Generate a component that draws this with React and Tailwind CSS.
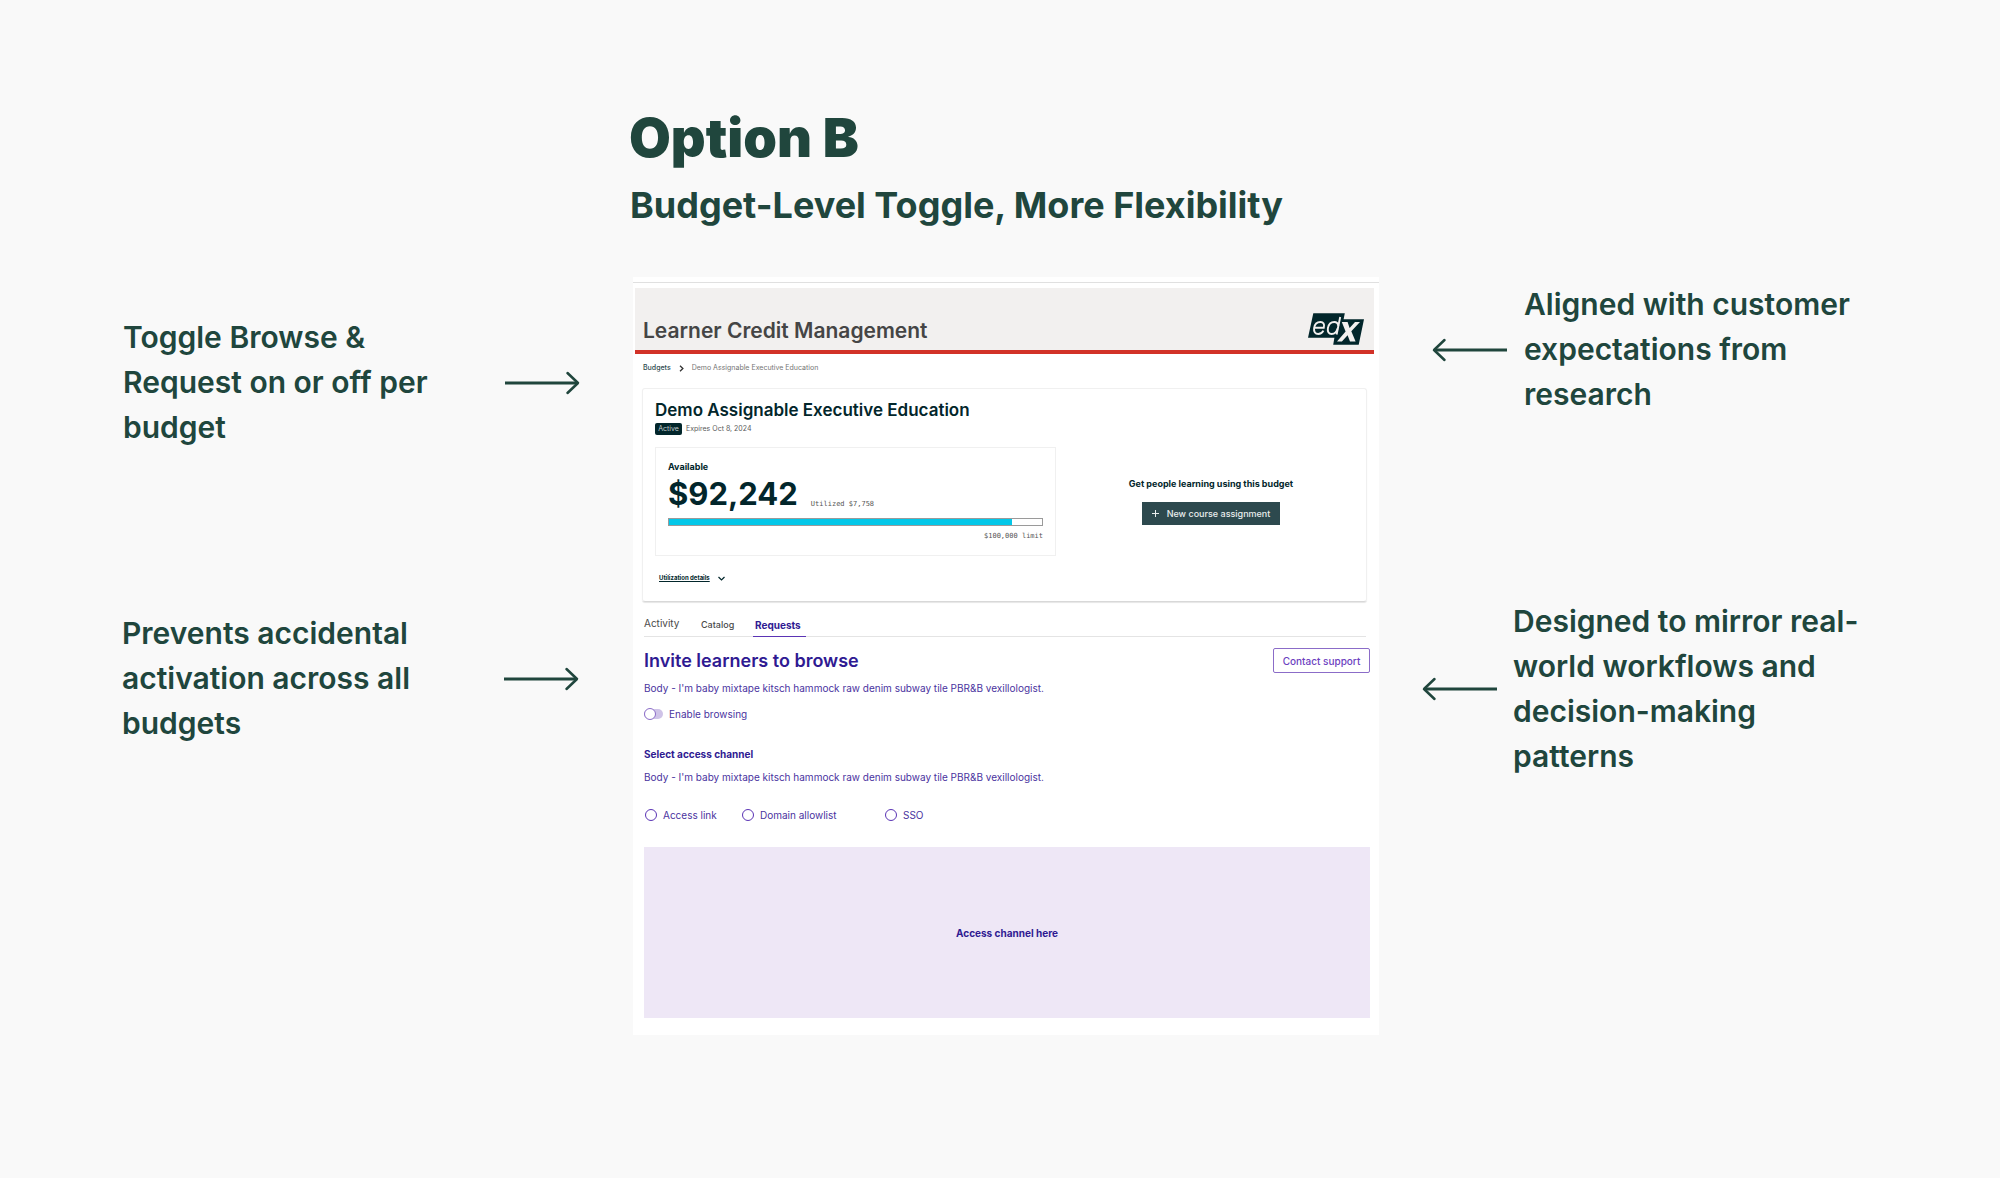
import React from "react";

const INTER = "font-['Inter',sans-serif]";

function Arrow({ flip }) {
  return (
    <svg
      width="76"
      height="26"
      viewBox="0 0 76 26"
      fill="none"
      stroke="currentColor"
      strokeWidth="3"
      className={flip ? "shrink-0 rotate-180" : "shrink-0"}
      aria-hidden="true"
    >
      <path d="M0 13H73" />
      <path d="M62.500 3L73 13L62.500 23" strokeLinecap="round" strokeLinejoin="round" strokeWidth="2.500" />
    </svg>
  );
}

function EdxLogo() {
  return (
    <svg width="56" height="32" viewBox="0 0 56 32" role="img" aria-label="edX">
      <path d="M5.300 0.300H36.800L35.600 6.300H56L50.700 31.700H25.200L26.400 24.800H0Z" fill="#02262b" />
      <g fill="none" stroke="#f2f0ef" strokeWidth="1.900">
        <path d="M6.800 14.800H15.800C16.800 11.300 15.300 9 12.500 9C9 9 6.600 11.600 6.100 15.200C5.600 18.800 7.300 21 10.200 21C12.500 21 14.300 19.800 15.400 17.600" />
        <path d="M32.200 4L28.600 21.500" />
        <path d="M30.400 12.800C30 10.300 28.500 9 26.300 9C22.800 9 20.500 11.800 19.900 15.200C19.300 18.700 20.800 21 23.700 21C26.600 21 28.800 18.800 29.600 15.600" />
      </g>
      <path d="M33.800 9H39.600L41.600 15L47 9H52L43.300 18.300L47.600 28.500H42L39.600 22.200L33.900 28.500H29L37.600 18.500Z" fill="#f2f0ef" />
    </svg>
  );
}

function Note({ children, flip, className }) {
  return (
    <div className={className}>
      {flip && <Arrow flip />}
      <p className="w-[352px] text-[30px] leading-[45px] font-semibold">{children}</p>
      {!flip && <Arrow />}
    </div>
  );
}

function RadioOption({ label, id, className }) {
  return (
    <div className={className}>
      <input
        type="radio"
        name="channel"
        id={id}
        className="m-0 size-3 shrink-0 appearance-none rounded-full border border-[#5b34b5] checked:bg-[#5b34b5]"
      />
      <label htmlFor={id}>{label}</label>
    </div>
  );
}

function BudgetCard() {
  return (
    <section className="mr-3 ml-[9px] mt-[10px] h-[214px] rounded-[3px] border border-[#f0f0f0] border-b-[#d8d8d8] pl-3 text-[#02262b] shadow-[0_1px_1px_#e6e6e6]">
      <h3 className="mt-2 text-[17px] leading-[26px] font-semibold">Demo Assignable Executive Education</h3>
      <div className="flex items-center gap-1">
        <span className="h-3 w-[27px] rounded-[2px] bg-[#02262b] text-center text-[7px] leading-3 text-[#c3cccd]">Active</span>
        <span className="text-[7px] leading-3 text-[#5a5a5a]">Expires Oct 8, 2024</span>
      </div>
      <div className="mt-3 flex">
        <div className="h-[109px] w-[401px] border border-[#f0f0f0] px-3 pt-[13px]">
          <p className="text-[9px] leading-3 font-bold">Available</p>
          <div className="mt-px flex items-end gap-[13px]">
            <span className="text-[31px] leading-10 font-bold">$92,242</span>
            <span className="pb-[6px] font-['DejaVu_Sans_Mono',monospace] text-[7px] leading-2 text-[#555]">Utilized $7,758</span>
          </div>
          <div className="mt-1 h-2 border border-[#9a9a9a] bg-white">
            <div className="h-full w-[92%] bg-[#03c7e8]" />
          </div>
          <p className="mt-[6px] text-right font-['DejaVu_Sans_Mono',monospace] text-[7px] leading-2 text-[#555]">$100,000 limit</p>
        </div>
        <div className="flex flex-1 flex-col items-center pt-[31px]">
          <p className="text-[9px] leading-3 font-bold">Get people learning using this budget</p>
          <button type="button" className="mt-3 flex h-[23px] w-[138px] items-center justify-center gap-2 bg-[#2d494e] text-[9px] leading-3 font-medium text-[#e9eded]">
            <svg width="7" height="7" viewBox="0 0 7 7" stroke="currentColor" aria-hidden="true">
              <path d="M3.500 0V7M0 3.500H7" />
            </svg>
            New course assignment
          </button>
        </div>
      </div>
      <button type="button" className="mt-4 ml-1 flex items-center gap-2 text-[6px] leading-3 font-bold">
        <span className="underline">Utilization details</span>
        <svg width="7" height="5" viewBox="0 0 7 5" fill="none" stroke="currentColor" strokeWidth="1.200" aria-hidden="true">
          <path d="M0.500 1L3.500 4L6.500 1" />
        </svg>
      </button>
    </section>
  );
}

function RequestsPanel() {
  return (
    <section className="mr-[9px] ml-[11px] text-[10px] leading-4 text-[#4a33a0]">
      <div className="mt-[11px] flex items-center justify-between">
        <h3 className="text-[18px] leading-6 font-semibold text-[#2f1a92]">Invite learners to browse</h3>
        <button type="button" className="h-[25px] w-[97px] rounded-[2px] border border-[#8b6cc8] text-[10px] font-medium text-[#6c3fbf]">Contact support</button>
      </div>
      <p className="mt-[7px]">Body - I'm baby mixtape kitsch hammock raw denim subway tile PBR&amp;B vexillologist.</p>
      <div className="mt-[10px] flex items-center gap-[6px]">
        <input
          type="checkbox"
          role="switch"
          id="browsing"
          className="m-0 flex h-[10px] w-[19px] appearance-none items-center rounded-full bg-[#cfc3e8] before:size-3 before:shrink-0 before:rounded-full before:border before:border-[#8b6cc8] before:bg-white"
        />
        <label htmlFor="browsing">Enable browsing</label>
      </div>
      <h4 className="mt-6 font-bold text-[#2f1a92]">Select access channel</h4>
      <p className="mt-[7px]">Body - I'm baby mixtape kitsch hammock raw denim subway tile PBR&amp;B vexillologist.</p>
      <div className="mt-[22px] flex pl-px">
        <RadioOption id="link" label="Access link" className="flex w-[97px] items-center gap-[6px]" />
        <RadioOption id="domain" label="Domain allowlist" className="flex w-[143px] items-center gap-[6px]" />
        <RadioOption id="sso" label="SSO" className="flex items-center gap-[6px]" />
      </div>
      <div className="mt-6 flex h-[171px] items-center justify-center bg-[#eee7f6] font-bold text-[#2f1a92]">Access channel here</div>
    </section>
  );
}

export default function App() {
  return (
    <main className={`${INTER} grid min-h-screen grid-cols-[633fr_746fr_621fr] bg-[#f9f9f9] text-[#20463d]`}>
      <aside className="pt-[315px]">
        <Note className="ml-[123px] flex items-center gap-[30px]">
          Toggle Browse &amp; Request on or off per budget
        </Note>
        <Note className="mt-[161px] ml-[122px] flex items-center gap-[30px]">
          Prevents accidental activation across all budgets
        </Note>
      </aside>

      <div className="pt-[104px] pb-[144px]">
        <h1 className="-ml-1 text-[54px] leading-[68px] font-black">Option B</h1>
        <h2 className="-ml-[3px] mt-[10px] text-[36px] leading-[46px] font-bold whitespace-nowrap">
          Budget-Level Toggle, More Flexibility
        </h2>
        <article className="mt-[49px] bg-white pt-[5px] pb-[17px]">
          <header className="border-t border-[#e0e0e0] pt-[5px]">
            <div className="mr-[5px] ml-[2px] flex h-[66px] items-start justify-between border-b-4 border-[#d23228] bg-[#f2f0ef] pr-[10px] pl-2">
              <h2 className="mt-[29px] text-[21px] leading-7 font-semibold text-[#454545]">Learner Credit Management</h2>
              <div className="mt-[25px]">
                <EdxLogo />
              </div>
            </div>
          </header>
          <nav aria-label="Breadcrumb" className="mt-2 ml-[10px] flex items-center gap-2 text-[7px] leading-3">
            <a href="#budgets" className="font-medium text-[#2d494e]">Budgets</a>
            <svg width="5" height="7" viewBox="0 0 5 7" fill="none" stroke="#333" strokeWidth="1.300" aria-hidden="true">
              <path d="M1 0.700L3.900 3.500L1 6.300" />
            </svg>
            <span className="text-[#757575]">Demo Assignable Executive Education</span>
          </nav>
          <div className="pt-1">
            <BudgetCard />
          </div>
          <nav aria-label="Budget" className="mr-[13px] ml-[11px] mt-[13px] flex h-[22px] border-b border-[#e4e4e4] text-[9px] leading-4 text-[#4a4a4a]">
            <a href="#activity" className="w-[57px] text-[10px]">Activity</a>
            <a href="#catalog" className="w-[52px] pt-[2px] font-medium">Catalog</a>
            <a href="#requests" className="-mb-px w-[53px] border-b border-[#5b34b5] pt-[2px] pl-[2px] text-[10px] font-bold text-[#2f1a92]">Requests</a>
          </nav>
          <RequestsPanel />
        </article>
      </div>

      <aside className="pt-[282px]">
        <Note flip className="ml-[52px] flex items-center gap-[17px]">
          Aligned with customer expectations from research
        </Note>
        <Note flip className="mt-[182px] ml-[42px] flex items-center gap-4">
          Designed to mirror real-world workflows and decision-making patterns
        </Note>
      </aside>
    </main>
  );
}
